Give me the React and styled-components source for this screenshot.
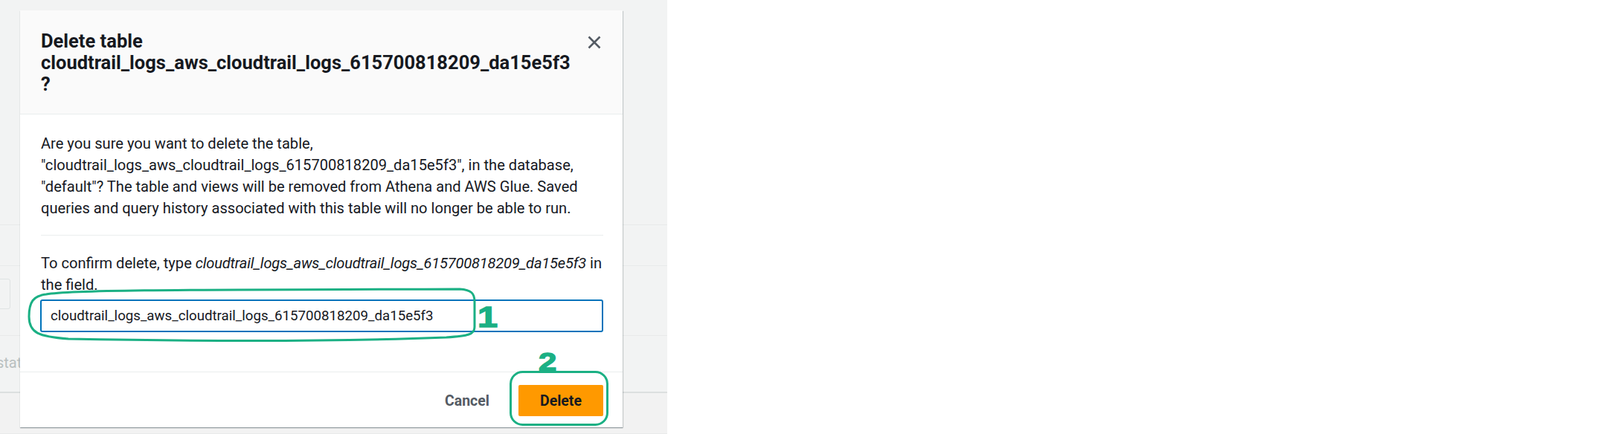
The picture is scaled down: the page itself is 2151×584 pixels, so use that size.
import React from 'react';
import styled, { createGlobalStyle } from 'styled-components';

const GlobalStyle = createGlobalStyle`
  html, body {
    margin: 0;
    padding: 0;
    background: #ffffff;
  }
  body {
    font-family: Roboto, "Liberation Sans", sans-serif;
    color: #16191f;
  }
  * {
    box-sizing: border-box;
  }
`

const Page = styled.div`
  display: flex;
  width: 2151px;
  height: 584px;
  background: #ffffff;
  overflow: hidden;
`

const Screen = styled.div`
  position: relative;
  flex: 0 0 897px;
  height: 584px;
  background: #f2f3f3;
  overflow: hidden;
`

const Backdrop = styled.div`
  display: flex;
  flex-direction: column;
  height: 100%;
`

const BgRow = styled.div`
  flex: 0 0 ${p => p.$h}px;
  display: flex;
  align-items: flex-start;
  border-bottom: ${p => p.$strong ? '2px solid #dcdfdf' : '1px solid #e8eaea'};
  background: ${p => p.$tint || 'transparent'};
`

const BgField = styled.div`
  margin: 17px 0 0 -12px;
  width: 26px;
  height: 41px;
  border: 1px solid #dfe3e3;
  border-radius: 3px;
`

const BgText = styled.span`
  margin: 24px 0 0 -5px;
  font-size: 20px;
  color: #b9c0c0;
`

const Modal = styled.div`
  position: absolute;
  left: 27px;
  top: 14px;
  width: 810px;
  background: #ffffff;
  box-shadow: 0 1px 1px rgba(0, 28, 36, 0.3), 1px 1px 1px rgba(0, 28, 36, 0.15);
`

const Header = styled.div`
  display: flex;
  align-items: flex-start;
  padding: 26.5px 29px 24.5px 28px;
  background: #fafafa;
  border-bottom: 1px solid #eaeded;
`

const Title = styled.h2`
  flex: 1;
  margin: 0;
  font-size: 25.5px;
  line-height: 29.4px;
  font-weight: 700;
  color: #16191f;
`

const CloseButton = styled.button`
  display: flex;
  margin-top: 7.5px;
  padding: 0;
  border: none;
  background: transparent;
  cursor: pointer;
`

const Body = styled.div`
  padding: 24.5px 26px 53px 27px;
`

const Text = styled.p`
  margin: ${p => p.$top || 0}px 0 0 1px;
  font-size: 20.1px;
  line-height: 29px;
  white-space: nowrap;
  color: #16191f;
`

const Name = styled.em`
  font-style: italic;
  letter-spacing: -0.2px;
`

const Divider = styled.hr`
  margin: 21.5px 0 0 1px;
  border: none;
  border-top: 1px solid #eaeded;
`

const Field = styled.input`
  display: block;
  width: 100%;
  height: 44px;
  margin-top: 5.5px;
  padding: 0 12px;
  border: 2px solid #0073bb;
  border-radius: 3px;
  font-family: Roboto, "Liberation Sans", sans-serif;
  font-size: 18.7px;
  color: #16191f;
  outline: none;
`

const Footer = styled.div`
  display: flex;
  justify-content: flex-end;
  gap: 10px;
  padding: 17px 26px 15px 27px;
  border-top: 1px solid #eaeded;
`

const Button = styled.button`
  height: 42px;
  padding: 0 29px;
  border: none;
  border-radius: 2px;
  background: ${p => p.$primary ? '#ff9900' : 'transparent'};
  color: ${p => p.$primary ? '#16191f' : '#545b64'};
  font-family: Roboto, "Liberation Sans", sans-serif;
  font-size: 19.5px;
  font-weight: 700;
  cursor: pointer;
`

const Marks = styled.svg`
  position: absolute;
  left: 0;
  top: 0;
  pointer-events: none;
`

const Step = styled.span`
  position: absolute;
  left: ${p => p.$x}px;
  top: ${p => p.$y}px;
  font-family: "Liberation Sans", Arial, sans-serif;
  font-size: ${p => p.$size}px;
  line-height: ${p => p.$size}px;
  font-weight: 700;
  color: #1bb084;
  -webkit-text-stroke: 1.4px #1bb084;
  transform: scaleX(1.25);
  transform-origin: left top;
`

const TABLE = 'cloudtrail_logs_aws_cloudtrail_logs_615700818209_da15e5f3';

export default function App() {
  return (
    <Page>
      <GlobalStyle />
      <Screen>
        <Backdrop>
          <BgRow $h={303} />
          <BgRow $h={55} />
          <BgRow $h={94}><BgField /></BgRow>
          <BgRow $h={77} $strong><BgText>status</BgText></BgRow>
          <BgRow $h={55} $tint="#f2f2f2" />
        </Backdrop>

        <Modal>
          <Header>
            <Title>
              Delete table<br />{TABLE}<br />?
            </Title>
            <CloseButton aria-label="Close">
              <svg width="18" height="18" viewBox="0 0 18 18">
                <path d="M1.5 1.5 L16.5 16.5 M16.5 1.5 L1.5 16.5" stroke="#545b64" strokeWidth="2.6" fill="none" />
              </svg>
            </CloseButton>
          </Header>

          <Body>
            <Text>
              Are you sure you want to delete the table,<br />
              "{TABLE}", in the database,<br />
              "default"? The table and views will be removed from Athena and AWS Glue. Saved<br />
              queries and query history associated with this table will no longer be able to run.
            </Text>
            <Divider />
            <Text $top={22.5}>
              To confirm delete, type <Name>{TABLE}</Name> in<br />
              the field.
            </Text>
            <Field defaultValue={TABLE} />
          </Body>

          <Footer>
            <Button>Cancel</Button>
            <Button $primary>Delete</Button>
          </Footer>
        </Modal>

        <Marks width="897" height="584" viewBox="0 0 897 584">
          <path
            d="M62 396 C 100 389, 320 390, 618 389 C 634 390, 638 395, 638 406 L 638 440 C 638 450, 630 452, 600 454 C 450 460, 250 459, 92 456 C 52 453, 39 448, 39 426 C 39 406, 45 398, 62 396 Z"
            fill="none"
            stroke="#1bb084"
            strokeWidth="3"
          />
          <rect x="686.5" y="500.5" width="130" height="71" rx="16" fill="none" stroke="#1bb084" strokeWidth="3" />
        </Marks>
        <Step $x={642} $y={407} $size={39}>1</Step>
        <Step $x={724} $y={469} $size={35}>2</Step>
      </Screen>
    </Page>
  );
}
